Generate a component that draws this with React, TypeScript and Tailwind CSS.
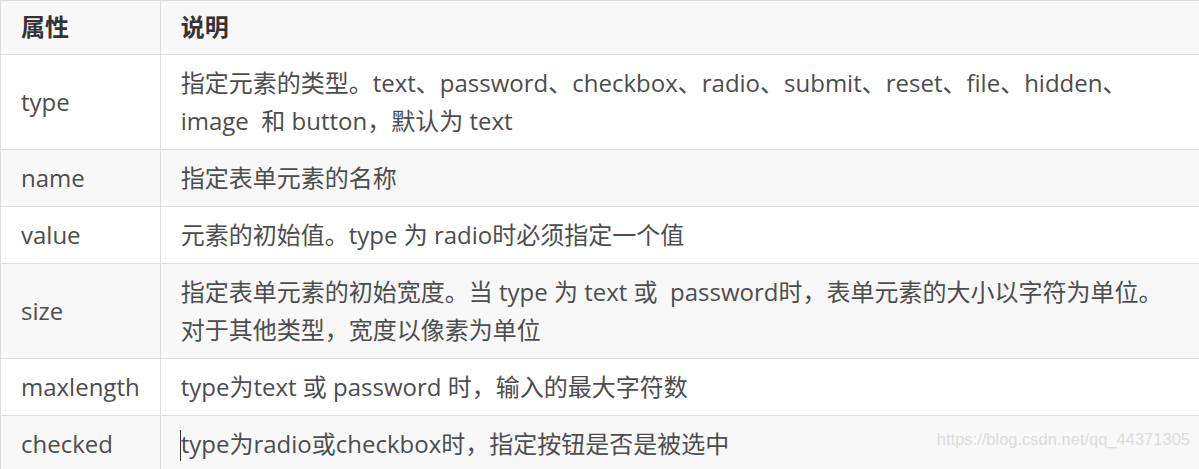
const rows: { name: string; desc: React.ReactNode }[] = [
  {
    name: "type",
    desc: (
      <>
        指定元素的类型。text、password、checkbox、radio、submit、reset、file、hidden、
        <br />
        image{"\u00a0 "}和 button，默认为 text
      </>
    ),
  },
  { name: "name", desc: "指定表单元素的名称" },
  { name: "value", desc: "元素的初始值。type 为 radio时必须指定一个值" },
  {
    name: "size",
    desc: (
      <>
        指定表单元素的初始宽度。当 type 为 text 或{"\u00a0 "}password时，表单元素的大小以字符为单位。
        <br />
        对于其他类型，宽度以像素为单位
      </>
    ),
  },
  { name: "maxlength", desc: "type为text 或 password 时，输入的最大字符数" },
  {
    name: "checked",
    desc: (
      <>
        <span className="inline-block w-px h-[31px] bg-[#333] align-[-8px] -ml-px"></span>
        type为radio或checkbox时，指定按钮是否是被选中
      </>
    ),
  },
];

export default function App() {
  return (
    <div
      className="relative w-[1199px] h-[469px] overflow-hidden bg-white text-[#4d4d4d]"
      style={{ fontFamily: '"Open Sans", "Noto Sans CJK SC", sans-serif' }}
    >
      <table className="w-[1220px] border-collapse text-[24px] leading-[38px]">
        <thead>
          <tr className="bg-[#f8f8f8]">
            <th className="w-[159px] border border-[#dddddd] px-5 pt-[7px] pb-[8px] text-left font-bold text-[#333]">
              属性
            </th>
            <th className="border border-[#dddddd] px-5 pt-[7px] pb-[8px] text-left font-bold text-[#333]">
              说明
            </th>
          </tr>
        </thead>
        <tbody>
          {rows.map((r, i) => (
            <tr key={r.name} className={i % 2 === 1 ? "bg-[#f8f8f8]" : "bg-white"}>
              <td className="border border-[#dddddd] px-5 py-[9px] align-middle whitespace-nowrap">{r.name}</td>
              <td className="border border-[#dddddd] px-5 py-[9px] align-middle whitespace-nowrap">{r.desc}</td>
            </tr>
          ))}
        </tbody>
      </table>
      <div
        className="absolute right-[9px] top-[431px] text-[16.5px] leading-none text-[#dcdcdc]"
        style={{ fontFamily: '"Liberation Sans", Arial, sans-serif' }}
      >
        https://blog.csdn.net/qq_44371305
      </div>
    </div>
  );
}
